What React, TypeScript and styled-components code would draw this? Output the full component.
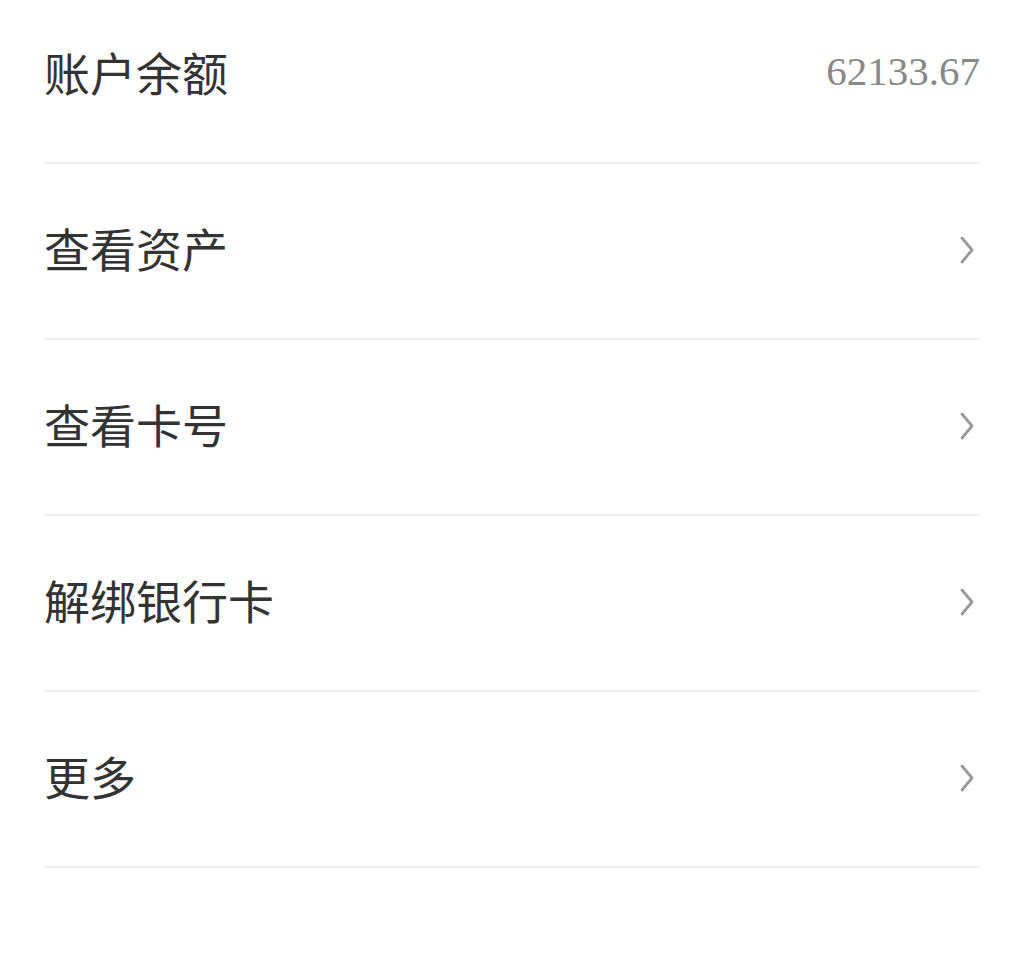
import React from 'react';
import styled, { createGlobalStyle } from 'styled-components';

const GlobalStyle = createGlobalStyle`
  body {
    margin: 0;
    background: #fff;
    font-family: "Noto Sans CJK SC", "Noto Sans", sans-serif;
  }
`;

const List = styled.div`
  display: flex;
  flex-direction: column;
  padding: 0 44px;
`;

const Row = styled.div<{ $first?: boolean }>`
  display: flex;
  align-items: center;
  justify-content: space-between;
  box-sizing: border-box;
  height: ${(p) => (p.$first ? '164px' : '176px')};
  padding-bottom: ${(p) => (p.$first ? '20px' : '8px')};
  border-bottom: 2px solid #efefef;
  cursor: pointer;
`;

const Label = styled.div`
  font-size: 46px;
  line-height: 1;
  color: #333;
`;

const Balance = styled.div`
  font-family: "Liberation Serif", serif;
  font-size: 41px;
  line-height: 1;
  color: #888;
`;

const Chevron = styled.svg`
  width: 14px;
  height: 28px;
  margin: 6px 6px 0 0;
`;

const Arrow = () => (
  <Chevron viewBox="0 0 14 28">
    <path
      d="M2 2 L12 14 L2 26"
      fill="none"
      stroke="#999"
      strokeWidth="2.8"
      strokeLinecap="round"
      strokeLinejoin="round"
    />
  </Chevron>
);

const items = ['查看资产', '查看卡号', '解绑银行卡', '更多'];

const App = () => {
  return (
    <>
      <GlobalStyle />
      <List>
        <Row $first>
          <Label>账户余额</Label>
          <Balance>62133.67</Balance>
        </Row>
        {items.map((name) => (
          <Row key={name}>
            <Label>{name}</Label>
            <Arrow />
          </Row>
        ))}
      </List>
    </>
  );
};

export default App;
